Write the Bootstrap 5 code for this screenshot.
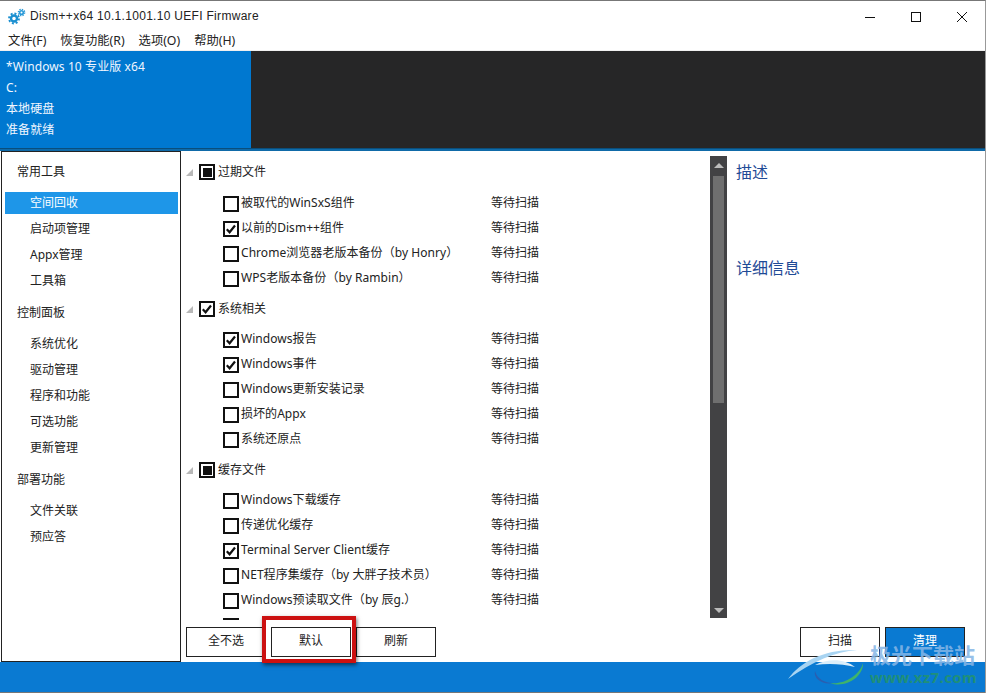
<!DOCTYPE html>
<html lang="zh"><head><meta charset="utf-8"><title>Dism++</title>
<link href="https://cdn.jsdelivr.net/npm/bootstrap@5.3.0/dist/css/bootstrap.min.css" rel="stylesheet">
<style>
html,body{height:693px;overflow:hidden;background:#fff}
body{font-family:"Noto Sans","Noto Sans CJK SC",sans-serif;font-size:12px;color:#222;line-height:1.2}
.app{width:986px;height:693px;position:relative;border-top:1px solid #777;border-right:1px solid #999;overflow:hidden}
.ttl{height:31px;padding-left:8px;font-family:"Liberation Sans","Noto Sans CJK SC",sans-serif;font-size:12px;letter-spacing:.3px;flex:none}
.wbtn{width:46px;height:31px}
.menubar{height:18px;flex:none;background:#fff;padding-left:8px;gap:14px;font-size:12.3px}
.sep{height:1px;background:#f0f0f0;flex:none}
.banner{height:97px;flex:none;background:#262627}
.info{width:251px;background:#0078d0;color:#f0f6ff;padding:5px 0 0 6px;font-size:12px;letter-spacing:.1px}
.info div{height:21px;line-height:21px}
.bline{height:3px;flex:none;background:#0f6aa8;border-top:1px solid #0a4e7c}
.mainrow{height:511px;flex:none}
.side{border:1px solid #222;margin-left:1px;width:180px;padding-top:9px}
.sgrp{height:21px;line-height:21px;padding-left:15px;margin-bottom:10px}
.sitem{height:22px;line-height:22px;padding-left:25px;margin:0 2px 4px 3px}
.sitem.on{background:#1e96e8;color:#fff}
.sgap{height:6px}
.listarea{width:529px;height:469px;overflow:hidden;padding-top:10px;position:relative}
.grow{height:22px;margin-bottom:9px;padding-left:18px}
.grow.first{margin-bottom:10px}
.irow{height:20px;margin-bottom:5px;padding-left:42px}
.irow .lbl{width:250px;white-space:nowrap;letter-spacing:.05px}
.arr{width:0;height:0;border-style:solid;border-width:0 0 7px 7px;border-color:transparent transparent #b8b8b8 transparent;margin-left:-13px;margin-right:6px}
.ck{width:16px;height:16px;border:2px solid #111;background:#fff;flex:none;margin-right:2px;position:relative;display:block;margin-top:2px}
.grow .ck{margin-top:0;margin-right:3px}
.ck svg{display:block;position:absolute;left:0;top:0}
.ck.mix::after{content:"";position:absolute;left:1.5px;top:1.5px;width:9px;height:9px;background:#111}
.groupgap{height:5px}
.sbar{width:17px;height:462px;background:#424244;margin-top:5px;flex:none;position:relative}
.sup{height:20px;position:relative}
.thumb{height:227px;width:11px;background:#6f6f6f;margin:0 auto}
.tri{position:absolute;left:4px;width:0;height:0;border-left:5px solid transparent;border-right:5px solid transparent}
.tri.u{top:7px;border-bottom:5px solid #bbb}
.tri.d{bottom:5px;border-top:5px solid #bbb}
.desc{padding:12px 0 0 9px;font-size:16px;color:#1f4a96;flex:1}
.desc .dh{height:96px;line-height:19px}
.btnrow{height:42px;padding:7px 0 0 5px}
.wbx{width:80px;height:30px;border:1px solid #222;background:#fff;color:#222;font-size:12px;display:flex;align-items:center;justify-content:center;margin-right:5px;border-radius:0;padding:0 0 2px}
.wbx.pri{background:#0a7ad2;color:#fff;margin-right:0}
.btm{height:30px;flex:none;background:#0a7ad2}
.under{height:1px;flex:none;background:#777}
.red{position:absolute;left:262px;top:615px;width:94px;height:47px;border:4px solid #cc1111;box-shadow:1px 2px 4px rgba(0,0,0,.55);pointer-events:none}
.wm{position:absolute;left:785px;top:640px;pointer-events:none}
.wmt{position:absolute;left:870px;top:644px;font-weight:700;font-size:21px;color:#86b6e6;white-space:nowrap;line-height:1;opacity:.85}
.wmu{position:absolute;left:870px;top:669px;font-weight:700;font-size:15px;letter-spacing:.4px;color:#1f8f7a;line-height:1}
.col-main{flex:1}
.rend{margin-right:20px}
</style></head><body>
<div class="app d-flex flex-column">
  <div class="ttl d-flex align-items-center">
    <svg width="19" height="18" viewBox="0 0 19 18" class="flex-none" style="margin-top:1px"><g fill="none"><circle cx="6" cy="10.5" r="3" stroke="#1a8fd0" stroke-width="2.4"/><circle cx="6" cy="10.5" r="5" stroke="#1a8fd0" stroke-width="1.8" stroke-dasharray="2 1.9"/><circle cx="13.5" cy="4.5" r="1.8" stroke="#2a9ad8" stroke-width="1.6"/><circle cx="13.5" cy="4.5" r="3.2" stroke="#2a9ad8" stroke-width="1.3" stroke-dasharray="1.4 1.1"/></g></svg>
    <span style="margin-left:3px">Dism++x64 10.1.1001.10 UEFI Firmware</span>
    <div class="ms-auto d-flex">
      <div class="wbtn d-flex align-items-center justify-content-center"><svg width="12" height="12"><path d="M1 6.5h10" stroke="#111"/></svg></div>
      <div class="wbtn d-flex align-items-center justify-content-center"><svg width="12" height="12"><rect x="1.5" y="1.5" width="9" height="9" fill="none" stroke="#111"/></svg></div>
      <div class="wbtn d-flex align-items-center justify-content-center"><svg width="12" height="12"><path d="M1 1l10 10M11 1L1 11" stroke="#111"/></svg></div>
    </div>
  </div>
  <div class="menubar d-flex align-items-center"><span>文件(F)</span><span>恢复功能(R)</span><span>选项(O)</span><span>帮助(H)</span></div>
  <div class="sep"></div>
  <div class="banner d-flex"><div class="info"><div>*Windows 10 专业版 x64</div><div>C:</div><div>本地硬盘</div><div>准备就绪</div></div></div>
  <div class="bline"></div>
  <div class="mainrow d-flex">
    <div class="side">
      <div class="sgrp">常用工具</div>
      <div class="sitem on">空间回收</div><div class="sitem">启动项管理</div><div class="sitem">Appx管理</div><div class="sitem">工具箱</div>
      <div class="sgap"></div><div class="sgrp">控制面板</div>
      <div class="sitem">系统优化</div><div class="sitem">驱动管理</div><div class="sitem">程序和功能</div><div class="sitem">可选功能</div><div class="sitem">更新管理</div>
      <div class="sgap"></div><div class="sgrp">部署功能</div>
      <div class="sitem">文件关联</div><div class="sitem">预应答</div>
    </div>
    <div class="col-main d-flex flex-column">
      <div class="d-flex">
        <div class="listarea" id="L"></div>
        <div class="sbar"><div class="sup"><i class="tri u"></i></div><div class="thumb"></div><i class="tri d"></i></div>
        <div class="desc"><div class="dh">描述</div><div class="dh">详细信息</div></div>
      </div>
      <div class="btnrow d-flex">
        <button class="wbx">全不选</button><button class="wbx">默认</button><button class="wbx">刷新</button>
        <div class="ms-auto d-flex rend"><button class="wbx">扫描</button><button class="wbx pri">清理</button></div>
      </div>
    </div>
  </div>
  <div class="btm"></div>
  <div class="under"></div>
  <div class="red"></div>
  <svg class="wm" width="90" height="45" viewBox="0 0 90 45"><path d="M3 38C16 20 40 8 72 9C50 11 28 20 3 38Z" fill="#a8d4f2"/><path d="M30 24c14-7 30-6 40 2c-12-3-26-4-40-2z" fill="#dbeefa"/><path d="M30 30c-2 8 8 14 18 12c-8 0-16-4-18-12z" fill="#2a5fb0"/><path d="M45 42c14 2 30-8 33-20c1 13-17 26-33 20z" fill="#3fb36a"/></svg>
  <div class="wmt">极光下载站</div>
  <div class="wmu">www.xz7.com</div>
</div>
<script>
var C='<svg width="12" height="12" viewBox="0 0 12 12"><path d="M1.8 6.2l2.8 3L10 2.5" fill="none" stroke="#111" stroke-width="2.2"/></svg>';
var D=[["过期文件","m",[["被取代的WinSxS组件",0],["以前的Dism++组件",1],["Chrome浏览器老版本备份（by Honry）",0],["WPS老版本备份（by Rambin）",0]]],
["系统相关","c",[["Windows报告",1],["Windows事件",1],["Windows更新安装记录",0],["损坏的Appx",0],["系统还原点",0]]],
["缓存文件","m",[["Windows下载缓存",0],["传递优化缓存",0],["Terminal Server Client缓存",1],["NET程序集缓存（by 大胖子技术员）",0],["Windows预读取文件（by 辰g.）",0],["",0]]]];
var h='';D.forEach(function(g,i){
h+='<div class="grow d-flex align-items-center'+(i==0?' first':'')+'"><i class="arr"></i><span class="ck '+(g[1]=='m'?'mix':'')+'">'+(g[1]=='c'?C:'')+'</span><span>'+g[0]+'</span></div>';
g[2].forEach(function(r){h+='<div class="irow d-flex align-items-center"><span class="ck">'+(r[1]?C:'')+'</span><span class="lbl">'+r[0]+'</span>'+(r[0]?'<span>等待扫描</span>':'')+'</div>';});
h+='<div class="groupgap"></div>';});
document.getElementById('L').innerHTML=h;
</script>
<script src="https://cdn.jsdelivr.net/npm/bootstrap@5.3.0/dist/js/bootstrap.bundle.min.js"></script>
</body></html>
